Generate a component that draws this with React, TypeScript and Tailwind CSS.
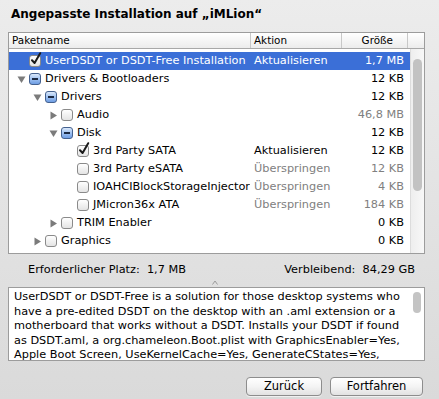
import React from "react";

type Row = {
  level: number;
  tri?: "down" | "right";
  cb: "off" | "on" | "mixed";
  name: string;
  action?: string;
  actionGray?: boolean;
  size: string;
  sizeGray?: boolean;
  selected?: boolean;
};

const rows: Row[] = [
  { level: 0, cb: "off", name: "EasyBoot Installation", action: "Überspringen", actionGray: true, size: "1,2 MB", sizeGray: true },
  { level: 0, cb: "on", name: "UserDSDT or DSDT-Free Installation", action: "Aktualisieren", size: "1,7 MB", selected: true },
  { level: 0, tri: "down", cb: "mixed", name: "Drivers & Bootloaders", size: "12 KB" },
  { level: 1, tri: "down", cb: "mixed", name: "Drivers", size: "12 KB" },
  { level: 2, tri: "right", cb: "off", name: "Audio", size: "46,8 MB", sizeGray: true },
  { level: 2, tri: "down", cb: "mixed", name: "Disk", size: "12 KB" },
  { level: 3, cb: "on", name: "3rd Party SATA", action: "Aktualisieren", size: "12 KB" },
  { level: 3, cb: "off", name: "3rd Party eSATA", action: "Überspringen", actionGray: true, size: "12 KB", sizeGray: true },
  { level: 3, cb: "off", name: "IOAHCIBlockStorageInjector", action: "Überspringen", actionGray: true, size: "4 KB", sizeGray: true },
  { level: 3, cb: "off", name: "JMicron36x ATA", action: "Überspringen", actionGray: true, size: "184 KB", sizeGray: true },
  { level: 2, tri: "right", cb: "off", name: "TRIM Enabler", size: "0 KB" },
  { level: 1, tri: "right", cb: "off", name: "Graphics", size: "0 KB" },
];

function Triangle({ dir }: { dir: "down" | "right" }) {
  return (
    <svg width="9" height="9" viewBox="0 0 9 9" className="shrink-0">
      {dir === "down" ? (
        <polygon points="0.5,1.5 8.5,1.5 4.5,8" fill="#7b7b7b" />
      ) : (
        <polygon points="1.5,0.5 8,4.5 1.5,8.5" fill="#7b7b7b" />
      )}
    </svg>
  );
}

function Checkbox({ state }: { state: "off" | "on" | "mixed" }) {
  if (state === "mixed") {
    return (
      <div className="relative w-[12px] h-[12px] rounded-[3px] border border-[#44618f] bg-gradient-to-b from-[#dbe9fb] via-[#9fc1f0] to-[#6e9de3] shrink-0">
        <div className="absolute left-[2px] top-[4px] w-[6px] h-[2px] bg-[#1c2a44]" />
      </div>
    );
  }
  return (
    <div className="relative w-[12px] h-[12px] rounded-[3px] border border-[#8a8a8a] bg-gradient-to-b from-[#ffffff] to-[#e4e4e4] shrink-0">
      {state === "on" && (
        <svg width="12" height="14" viewBox="0 0 12 14" className="absolute left-[0px] top-[-4px]">
          <path d="M2 8.2 L4.6 11 L10.2 1.2" stroke="#1a1a1a" strokeWidth="2" fill="none" strokeLinecap="round" strokeLinejoin="round" />
        </svg>
      )}
    </div>
  );
}

function TreeRow({ r }: { r: Row }) {
  const indent = 8 + r.level * 16;
  return (
    <div className={`flex h-[18px] items-center ${r.selected ? "bg-[#3b6fd7] text-white" : "text-black"}`}>
      <div className="w-[241px] shrink-0 flex items-center overflow-hidden whitespace-nowrap" style={{ paddingLeft: indent }}>
        <div className="w-[12px] shrink-0 flex items-center">{r.tri && <Triangle dir={r.tri} />}</div>
        <Checkbox state={r.cb} />
        <span className="ml-[4px]">{r.name}</span>
      </div>
      <div className={`w-[100px] shrink-0 pl-[4px] whitespace-nowrap ${r.selected ? "text-white" : r.actionGray ? "text-[#808080]" : "text-black"}`}>
        {r.action ?? ""}
      </div>
      <div className={`w-[54px] shrink-0 text-right whitespace-nowrap ${r.selected ? "text-white" : r.sizeGray ? "text-[#808080]" : "text-black"}`}>
        {r.size}
      </div>
    </div>
  );
}

function Button({ children, w }: { children: React.ReactNode; w: string }) {
  return (
    <div className={`${w} h-[19px] rounded-[4px] border border-[#8d8d8d] bg-gradient-to-b from-[#ffffff] via-[#f4f4f4] to-[#e2e2e2] flex items-center justify-center text-[11.5px] text-black shadow-[0_1px_0_rgba(255,255,255,0.6)]`}>
      {children}
    </div>
  );
}

export default function App() {
  const desc = [
    "UserDSDT or DSDT-Free is a solution for those desktop systems who",
    "have a pre-edited DSDT on the desktop with an .aml extension or a",
    "motherboard that works without a DSDT. Installs your DSDT if found",
    "as DSDT.aml, a org.chameleon.Boot.plist with GraphicsEnabler=Yes,",
    "Apple Boot Screen, UseKernelCache=Yes, GenerateCStates=Yes,",
  ];
  return (
    <div
      className="w-[439px] h-[399px] bg-gradient-to-b from-[#ececec] to-[#dadada] text-[11.3px] text-black overflow-hidden"
      style={{ fontFamily: '"DejaVu Sans", "Liberation Sans", sans-serif' }}
    >
      <div className="h-[32px] pl-[11px] pt-[6px] font-bold text-[12px] leading-[16px]">
        Angepasste Installation auf „iMLion“
      </div>

      <div className="ml-[8px] w-[417px] h-[222px] border border-[#9c9c9c] bg-white flex flex-col overflow-hidden">
        <div className="h-[16px] flex border-b border-[#a8a8a8] bg-gradient-to-b from-[#ffffff] to-[#ececec] text-[10.4px] leading-[15px] shrink-0">
          <div className="w-[242px] pl-[3px] border-r border-[#c8c8c8]">Paketname</div>
          <div className="w-[91px] pl-[3px] border-r border-[#c8c8c8]">Aktion</div>
          <div className="w-[66px] text-right pr-[14px] border-r border-[#c8c8c8]">Größe</div>
          <div className="flex-1" />
        </div>
        <div className="flex flex-1 overflow-hidden">
          <div className="flex-1 overflow-hidden">
            <div className="-mt-[15px] leading-[18px]">
              {rows.map((r, i) => (
                <TreeRow key={i} r={r} />
              ))}
            </div>
          </div>
          <div className="w-[14px] border-l border-[#dcdcdc] bg-gradient-to-r from-[#eeeeee] to-[#f8f8f8] flex justify-center pt-[10px]">
            <div className="w-[9px] h-[132px] rounded-full bg-[#c2c2c2]" />
          </div>
        </div>
      </div>

      <div className="h-[33px] flex items-center justify-between pl-[28px] pr-[24px] relative">
        <div className="whitespace-pre">Erforderlicher Platz:  1,7 MB</div>
        <div className="whitespace-pre">Verbleibend:  84,29 GB</div>
        <svg width="6" height="5" viewBox="0 0 6 5" className="absolute left-[212px] bottom-[2px]">
          <path d="M0.5 4.5 L3 1 L5.5 4.5" stroke="#9a9a9a" strokeWidth="1" fill="none" />
        </svg>
      </div>

      <div className="ml-[8px] w-[417px] h-[74px] border border-[#9c9c9c] bg-white flex overflow-hidden">
        <div className="flex-1 pl-[5px] pt-[2px] text-[11.3px] leading-[14.6px] whitespace-nowrap overflow-hidden">
          {desc.map((l, i) => (
            <div key={i}>{l}</div>
          ))}
        </div>
        <div className="w-[14px] flex justify-center pt-[4px]">
          <div className="w-[8px] h-[21px] rounded-full bg-[#c4c4c4]" />
        </div>
      </div>

      <div className="flex justify-end gap-[8px] pr-[16px] pt-[16px]">
        <Button w="w-[76px]">Zurück</Button>
        <Button w="w-[93px]">Fortfahren</Button>
      </div>
    </div>
  );
}
